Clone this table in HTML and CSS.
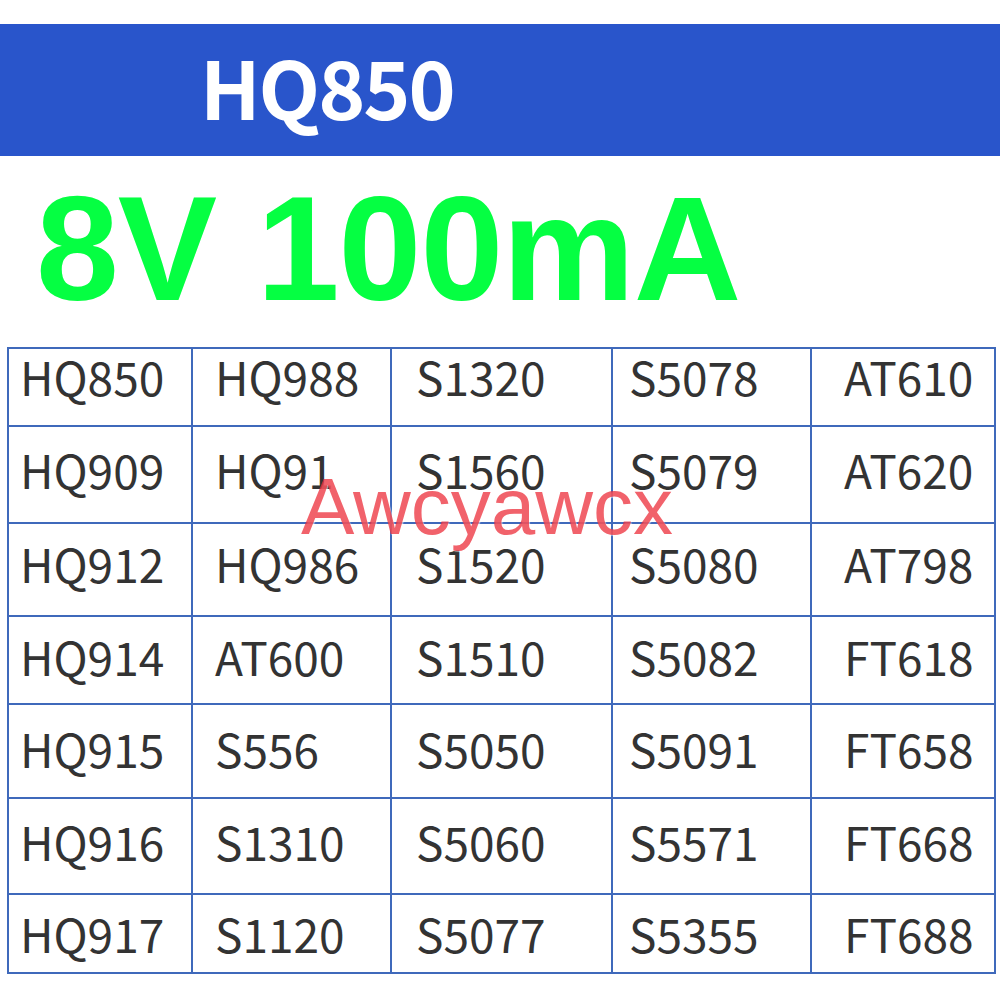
FILE: index.html
```html
<!DOCTYPE html>
<html>
<head>
<meta charset="utf-8">
<link rel="stylesheet" href="styles.css">
</head>
<body>
<div class="banner"><span class="model">HQ850</span></div>
<div class="spec">8V 100mA</div>
<div class="grid-wrap">
<table class="models">
<colgroup><col class="c1"><col class="c2"><col class="c3"><col class="c4"><col class="c5"></colgroup>
<tr class="r1"><td>HQ850</td><td>HQ988</td><td>S1320</td><td>S5078</td><td>AT610</td></tr>
<tr class="r2"><td>HQ909</td><td>HQ91</td><td>S1560</td><td>S5079</td><td>AT620</td></tr>
<tr class="r3"><td>HQ912</td><td>HQ986</td><td>S1520</td><td>S5080</td><td>AT798</td></tr>
<tr class="r4"><td>HQ914</td><td>AT600</td><td>S1510</td><td>S5082</td><td>FT618</td></tr>
<tr class="r5"><td>HQ915</td><td>S556</td><td>S5050</td><td>S5091</td><td>FT658</td></tr>
<tr class="r6"><td>HQ916</td><td>S1310</td><td>S5060</td><td>S5571</td><td>FT668</td></tr>
<tr class="r7"><td>HQ917</td><td>S1120</td><td>S5077</td><td>S5355</td><td>FT688</td></tr>
</table>
<div class="watermark">Awcyawcx</div>
</div>
</body>
</html>
```
FILE: styles.css
```css
html, body {
  margin: 0;
  padding: 0;
  background: #ffffff;
}
.banner {
  margin-top: 24px;
  height: 132px;
  background: #2955cb;
  box-sizing: border-box;
  padding-left: 200px;
  display: flex;
  align-items: center;
}
.model {
  font-family: "Noto Sans CJK SC", "Noto Sans", sans-serif;
  font-weight: 700;
  font-size: 80px;
  line-height: 1;
  color: #ffffff;
  letter-spacing: -2px;
  position: relative;
  top: -5px;
}
.spec {
  font-family: "Liberation Sans", Arial, sans-serif;
  font-weight: 700;
  font-size: 149px;
  line-height: 1;
  color: #05ff42;
  letter-spacing: -1px;
  padding-left: 36px;
  margin-top: 18px;
  height: 173px;
}
.grid-wrap {
  position: relative;
  margin-left: 7px;
  width: 987px;
}
.models {
  border-collapse: collapse;
  table-layout: fixed;
  width: 987px;
  font-family: "Noto Sans CJK SC", "Noto Sans", sans-serif;
  font-size: 46px;
  color: #333333;
}
.models td {
  border: 2px solid #3f69bb;
  padding: 0;
  vertical-align: middle;
  white-space: nowrap;
  line-height: 1;
}
.c1 { width: 184px; }
.c2 { width: 199px; }
.c3 { width: 221px; }
.c4 { width: 199px; }
.c5 { width: 184px; }
.models td:nth-child(1) { padding-left: 11px; }
.models td:nth-child(2) { padding-left: 22px; }
.models td:nth-child(3) { padding-left: 24px; }
.models td:nth-child(4) { padding-left: 16px; }
.models td:nth-child(5) { padding-left: 32px; }
.r1 { height: 78px; }
.r2 { height: 97px; }
.r3 { height: 93px; }
.r4 { height: 88px; }
.r5 { height: 94px; }
.r6 { height: 96px; }
.r7 { height: 79px; }
.models .r1 td { padding-bottom: 22px; }
.models .r2 td { padding-bottom: 11px; }
.models .r3 td { padding-bottom: 13px; }
.models .r4 td { padding-bottom: 8px; }
.models .r5 td { padding-bottom: 6px; }
.models .r6 td { padding-bottom: 10px; }
.models .r7 td { padding-bottom: 1px; }
.watermark {
  position: absolute;
  left: 294px;
  top: 120px;
  font-family: "Liberation Sans", Arial, sans-serif;
  font-size: 80px;
  line-height: 1;
  color: rgba(236, 45, 58, 0.75);
  text-shadow: 1px 1px 1px rgba(255, 255, 255, 0.6);
  pointer-events: none;
}
```
